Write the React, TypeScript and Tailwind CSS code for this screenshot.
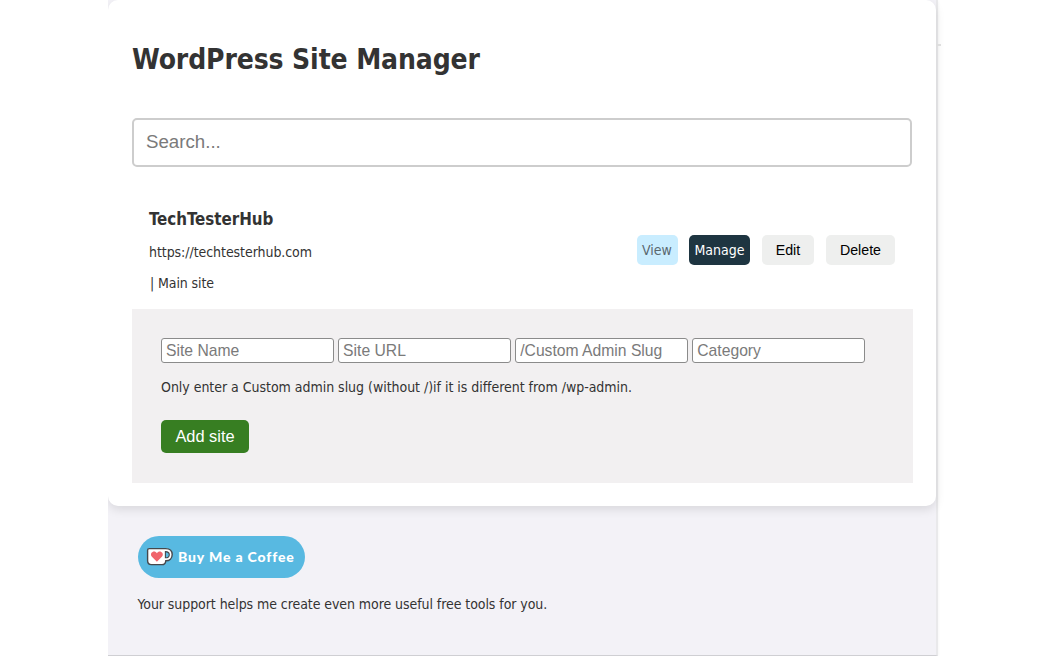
const ui = "font-['DejaVu_Sans_Condensed','DejaVu_Sans',sans-serif]";
const arial = "font-['Liberation_Sans',Arial,sans-serif]";

const fields = ["Site Name", "Site URL", "/Custom Admin Slug", "Category"];

function CupIcon() {
  return (
    <svg width="28" height="20" viewBox="0 0 28 20" className="shrink-0" aria-hidden="true">
      <path
        d="M3.2 1.6H19.6C23.6 1.6 26.2 3.9 26.2 7.6C26.2 11.4 23.6 13.8 19.8 13.8C19.5 16.3 18.3 17.6 16 17.6H5.4C2.8 17.6 1.6 16.2 1.6 13.8V3.2C1.6 2.2 2.2 1.6 3.2 1.6Z"
        fill="#fff"
        stroke="#45484c"
        strokeWidth="1.4"
      />
      <path d="M19.4 4.6C21.9 4.6 23.3 5.7 23.3 7.7C23.3 9.7 21.9 10.8 19.4 10.8Z" fill="#58b9e1" stroke="#45484c" strokeWidth="1.1" />
      <path
        d="M10.9 14.8L5.9 9.8C4.4 8.1 4.7 5.7 6.6 4.9C8.2 4.2 10 4.8 10.9 6.2C11.8 4.8 13.6 4.2 15.2 4.9C17.1 5.7 17.4 8.1 15.9 9.8Z"
        fill="#f0646b"
      />
    </svg>
  );
}

function SiteRow() {
  return (
    <div className="mt-[32px] flex h-[110px] items-center justify-between px-[17px] pb-[8px]">
      <div className="flex flex-col text-[14px] leading-[20px]">
        <h2 className="text-[16.8px] leading-[24px] font-bold">TechTesterHub</h2>
        <p className="mt-[11px] tracking-[-0.06px]">https://techtesterhub.com</p>
        <p className="mt-[11px] ml-px tracking-[-0.1px]">| Main site</p>
      </div>
      <div className="flex items-center gap-[12px] text-[14px]">
        <a className="flex h-[30px] w-[41px] items-center justify-center rounded-[5px] bg-[#c9edff] pt-[2px] text-[#5a686f]">View</a>
        <a className="-ml-[0.5px] flex h-[30px] w-[61px] items-center justify-center rounded-[5px] bg-[#1e3541] pt-[2px] text-white">Manage</a>
        <button className={`${arial} h-[30px] w-[52px] rounded-[5px] bg-[#eeefee] pt-[2px] text-[14.2px] text-black`}>Edit</button>
        <button className={`${arial} h-[30px] w-[69px] rounded-[5px] bg-[#eeefee] pt-[2px] text-[14.2px] text-black`}>Delete</button>
      </div>
    </div>
  );
}

function AddSiteForm() {
  return (
    <div className="h-[174px] w-[780.5px] bg-[#f2f0f1] px-[29px] pt-[29.5px]">
      <div className="flex gap-[4.3px]">
        {fields.map((f) => (
          <input
            key={f}
            placeholder={f}
            className={`${arial} h-[25px] w-[172.8px] shrink-0 rounded-[3px] border-[1.5px] border-[#8b8b8b] bg-white px-[4px] text-[15.7px] placeholder:text-[#7a7a7a]`}
          />
        ))}
      </div>
      <p className="mt-[13.5px] text-[14px] leading-[20px] tracking-[-0.03px]">
        Only enter a Custom admin slug (without /)if it is different from /wp-admin.
      </p>
      <button className={`${arial} mt-[23.5px] h-[33px] w-[88px] rounded-[5px] bg-[#377e22] text-[16.4px] text-white`}>Add site</button>
    </div>
  );
}

export default function App() {
  return (
    <div className={`${ui} relative h-[656px] overflow-hidden bg-white pl-[108px] text-[#333]`}>
      <div className="flex h-[656px] w-[830px] flex-col border-r-2 border-b border-r-[#e9e9eb] border-b-[#cfcfd3] bg-[#f3f2f7] shadow-[0_0_3px_rgba(0,0,0,0.06)] [clip-path:inset(0_-6px_0_0)]">
        <main className="h-[506px] shrink-0 rounded-[10px] bg-white px-[24px] pt-[39px] shadow-[0_4px_10px_rgba(0,0,0,0.10)]">
          <h1 className="h-[42px] text-[28px] leading-[42px] font-bold tracking-[-0.12px]">WordPress Site Manager</h1>
          <input
            placeholder="Search..."
            className={`${arial} mt-[36.5px] block h-[49px] w-[779.5px] rounded-[5px] border-2 border-[#cdcdcd] bg-white px-[12px] text-[18.7px] placeholder:text-[#7a7a7a]`}
          />
          <SiteRow />
          <AddSiteForm />
        </main>
        <footer className="flex flex-col items-start pt-[30px] pl-[29.5px]">
          <a className="flex h-[42px] w-[167.5px] items-center rounded-full bg-[#58b9e1] pl-[8.5px] whitespace-nowrap text-white">
            <CupIcon />
            <span className="ml-[4px] pb-px font-[family-name:Lato] text-[14px] leading-[18px] font-black tracking-[0.85px]">Buy Me a Coffee</span>
          </a>
          <p className="mt-[16px] text-[14px] leading-[20px] tracking-[-0.07px]">Your support helps me create even more useful free tools for you.</p>
        </footer>
      </div>
      <span className="absolute top-[44px] left-[936px] h-[2px] w-[5px] bg-[#dedede]" />
    </div>
  );
}
